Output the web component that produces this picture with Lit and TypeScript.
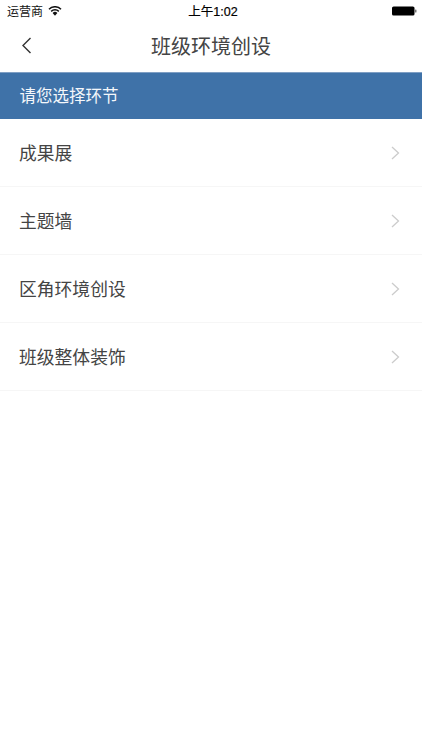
import { LitElement, html, css } from "lit";
import { customElement } from "lit/decorators.js";

const ITEMS = ["成果展", "主题墙", "区角环境创设", "班级整体装饰"];

@customElement("app-root")
export class AppRoot extends LitElement {
  static styles = css`
    :host {
      display: block;
      width: 422px;
      height: 750px;
      overflow: hidden;
      background: #fff;
      font-family: "Liberation Sans", "Noto Sans CJK SC", sans-serif;
      color: #333;
    }
    .status {
      height: 22px;
      box-sizing: border-box;
      display: grid;
      grid-template-columns: 1fr auto 1fr;
      align-items: center;
      padding: 0 3px 1px 7px;
      color: #111;
    }
    .status-left { display: flex; align-items: center; gap: 5px; font-size: 12px; }
    .time { font-size: 12.5px; color: #000; -webkit-text-stroke: 0.2px #000; }
    .status-right { display: flex; justify-content: flex-end; padding-right: 2.5px; }
    .nav {
      height: 50px;
      box-sizing: border-box;
      padding-bottom: 4px;
      display: grid;
      grid-template-columns: 52px 1fr 52px;
      align-items: center;
    }
    .back { display: flex; justify-content: flex-end; padding-right: 20px; }
    .title { text-align: center; font-size: 20px; color: #444; }
    .banner {
      height: 47px;
      display: flex;
      align-items: center;
      padding: 0 0 2px 19.5px;
      background: #3f72a8;
      color: #f4f7fb;
      font-size: 16.5px;
      border-top: 1px solid #7f9fc4;
      box-sizing: border-box;
    }
    .row {
      height: 68px;
      box-sizing: border-box;
      display: flex;
      align-items: center;
      justify-content: space-between;
      padding: 0 22px 0 19px;
      border-bottom: 1px solid #f6f6f6;
      font-size: 17.8px;
      color: #444;
    }
    .label { padding-bottom: 2px; }
    svg { display: block; }
  `;

  render() {
    return html`
      <div class="status">
        <div class="status-left">
          <span>运营商</span>
          <svg width="14" height="10" viewBox="0 0 14 10">
            <path d="M7 9.8 L4.6 7 A3.4 3.4 0 0 1 9.4 7 Z" fill="#111"/>
            <path d="M3.2 5.4 A5.4 5.4 0 0 1 10.8 5.4" fill="none" stroke="#111" stroke-width="1.5"/>
            <path d="M1 3.2 A8.5 8.5 0 0 1 13 3.2" fill="none" stroke="#111" stroke-width="1.5"/>
          </svg>
        </div>
        <div class="time">上午1:02</div>
        <div class="status-right">
          <svg width="25" height="10" viewBox="0 0 25 10">
            <rect x="0" y="0.5" width="22.5" height="9" rx="1.6" fill="#000"/>
            <rect x="23.2" y="3.5" width="1.2" height="3" rx="0.5" fill="#555"/>
          </svg>
        </div>
      </div>
      <div class="nav">
        <div class="back">
          <svg width="11" height="17" viewBox="0 0 11 17">
            <path d="M9.5 1 L2 8.5 L9.5 16" fill="none" stroke="#333" stroke-width="1.4"/>
          </svg>
        </div>
        <div class="title">班级环境创设</div>
        <div></div>
      </div>
      <div class="banner">请您选择环节</div>
      ${ITEMS.map(
        (t) => html`
          <div class="row">
            <span class="label">${t}</span>
            <svg width="9" height="14" viewBox="0 0 9 14">
              <path d="M1 1 L7.5 7 L1 13" fill="none" stroke="#ccc" stroke-width="1.3"/>
            </svg>
          </div>
        `
      )}
    `;
  }
}
